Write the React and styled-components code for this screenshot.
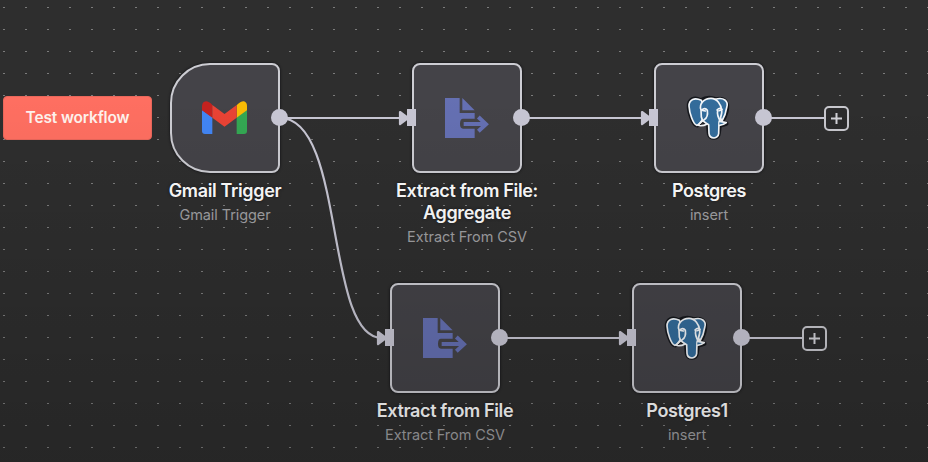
import React from "react";
import styled, { createGlobalStyle, css } from "styled-components";

const GlobalStyle = createGlobalStyle`
  body { margin: 0; background: #2e2e2e; overflow: hidden; }
  *, *::before, *::after { box-sizing: border-box; }
`;

const wire = "#c8c7d4";

const Canvas = styled.main`
  position: relative;
  display: flex;
  align-items: flex-start;
  width: 928px;
  height: 462px;
  padding: 96px 3px;
  overflow: hidden;
  background-color: #2e2e2e;
  background-image: radial-gradient(ellipse 1.3px 0.9px at 4px 7.5px, #7c7c7c 60%, transparent 100%);
  background-size: 22px 22px;
  font-family: Inter, "Liberation Sans", sans-serif;
`;

const Shade = styled.div`
  position: absolute;
  inset: 0;
  pointer-events: none;
  background: linear-gradient(rgba(0, 0, 0, 0) 20%, rgba(0, 0, 0, 0.17) 100%);
`;

const Wires = styled.svg`
  position: absolute;
  inset: 0;
  fill: none;
  stroke: ${wire};
  stroke-width: 2.2;
`;

const TestButton = styled.button`
  width: 149px;
  height: 44px;
  padding: 0;
  border: 1px solid #e9675b;
  border-radius: 4px;
  background: #ff6f61;
  color: #fff3ee;
  font: 600 15.5px/42px Inter, "Liberation Sans", sans-serif;
  letter-spacing: -0.15px;
  text-align: center;
`;

const NodeRoot = styled.article`
  position: absolute;
  left: ${(p) => p.$x - 25}px;
  top: ${(p) => p.$y}px;
  width: 160px;
  display: flex;
  flex-direction: column;
  align-items: center;
`;

const NodeBox = styled.div`
  position: relative;
  display: flex;
  align-items: center;
  justify-content: center;
  width: 110px;
  height: 110px;
  border: 2px solid #cdcdd3;
  border-radius: ${(p) => (p.$trigger ? "40px 8px 8px 40px" : "8px")};
  background: #444348;
  box-shadow: 0 0 2px 1px rgba(20, 20, 24, 0.6);
`;

const handle = css`
  position: absolute;
  background: ${wire};
`;

const OutputHandle = styled.span`
  ${handle}
  right: -10px;
  top: 44px;
  width: 17px;
  height: 17px;
  border-radius: 50%;
`;

const InputHandle = styled.span`
  ${handle}
  left: -7px;
  top: 44px;
  width: 9px;
  height: 17px;
`;

const Title = styled.h2`
  margin: 7px 0 0;
  color: #fff;
  font-size: 18px;
  font-weight: 600;
  line-height: 22px;
  letter-spacing: -0.36px;
  text-align: center;
  white-space: pre-line;
  text-shadow: 0 0 3px #18181c;
`;

const Subtitle = styled.p`
  margin: 2px 0 0;
  color: #a0a0a3;
  font-size: 14.5px;
  line-height: 22px;
  letter-spacing: -0.08px;
  text-align: center;
`;

const AddButton = styled.button`
  position: absolute;
  left: ${(p) => p.$x}px;
  top: ${(p) => p.$y}px;
  display: flex;
  align-items: center;
  justify-content: center;
  width: 25px;
  height: 25px;
  padding: 0;
  border: 2px solid #c8c8ce;
  border-radius: 5px;
  background: #2b2b2c;
`;

const GmailIcon = () => (
  <svg width="60" height="60" viewBox="0 -6 180 180">
    <path d="M21 60 L52 82 V132 H30 Q21 132 21 123Z" fill="#4285f4" />
    <path d="M125 82 L156 60 V123 Q156 132 147 132 H125Z" fill="#34a853" />
    <path d="M125 46 Q137 33 147 34 Q156 37 156 48 V61 L125 83Z" fill="#fbbc04" />
    <path d="M21 48 Q22 35 33 34 Q42 34 52 45 V83 L21 61Z" fill="#c5221f" />
    <path d="M52 45 L88.500 72 L125 45 V83 L88.500 110 L52 83Z" fill="#ea4335" />
  </svg>
);

const FileIcon = () => (
  <svg width="60" height="60" viewBox="6 9 180 180" fill="#6570b3">
    <path d="M30 39 H74 V84 H119 V101 H84 Q75 101 75 117 Q75 131 84 131 H119 V159 H30Z" />
    <path d="M82 39 L119 76 H82Z" />
    <path
      d="M86 117 H150 M130 96 L153 117.500 L130 139"
      fill="none"
      stroke="#6570b3"
      strokeWidth="12"
    />
  </svg>
);

const PostgresIcon = () => (
  <svg width="60" height="60" viewBox="-3 9 180 180" strokeLinejoin="round" strokeLinecap="round">
    <g fill="#336791" stroke="#15171c" strokeWidth="13">
      <path d="M62 46 Q41 35 29 51 Q22 64 34 97 Q43 122 52 121 L65 108 L84 115 L87 147 Q90 158 102 158 Q115 157 116 145 L119 122 L139 116 L127 108 Q143 83 141 60 Q136 37 107 43 Q85 33 62 46Z" />
    </g>
    <g fill="#336c9b" stroke="#f4f7fa" strokeWidth="5">
      <path d="M106 43 C130 35 147 48 140 68 Q137 90 126 108 L111 80Z" />
      <path d="M64 46 C44 36 27 43 27 63 C28 82 39 119 51 121 Q57 119 67 104 L75 71Z" />
      <path d="M63 75 C56 57 72 40 93 40 C112 40 123 59 125 75 C128 88 120 98 117 112 L116 146 Q114 158 102 159 Q88 158 87 145 L86 119 Q67 110 64 96Z" />
      <path d="M65 75 Q75 66 82 76 Q85 96 73 104 Q65 108 54 121 Q66 125 82 117" fill="none" />
      <path d="M111 75 Q119 67 126 73 M113 77 Q110 91 121 108" fill="none" />
      <path d="M119 109 L139 113 Q129 121 118 121" />
    </g>
    <path d="M68 76 L76 78 M117 77 L123 75" stroke="#f4f7fa" strokeWidth="5" />
  </svg>
);

const icons = { gmail: GmailIcon, file: FileIcon, postgres: PostgresIcon };

const nodes = [
  { id: "gmail", x: 170, y: 63, icon: "gmail", title: "Gmail Trigger", sub: "Gmail Trigger", trigger: true },
  { id: "aggregate", x: 412, y: 63, icon: "file", title: "Extract from File:\nAggregate", sub: "Extract From CSV" },
  { id: "postgres", x: 654, y: 63, icon: "postgres", title: "Postgres", sub: "insert" },
  { id: "extract", x: 390, y: 283, icon: "file", title: "Extract from File", sub: "Extract From CSV" },
  { id: "postgres1", x: 632, y: 283, icon: "postgres", title: "Postgres1", sub: "insert" },
];

const arrows = [
  [399, 118],
  [641, 118],
  [377, 338],
  [619, 338],
];

function WorkflowNode({ x, y, icon, title, sub, trigger }) {
  const Icon = icons[icon];
  return (
    <NodeRoot $x={x} $y={y}>
      <NodeBox $trigger={trigger}>
        <Icon />
        {!trigger && <InputHandle />}
        <OutputHandle />
      </NodeBox>
      <Title>{title}</Title>
      <Subtitle>{sub}</Subtitle>
    </NodeRoot>
  );
}

function AddNode({ x, y }) {
  return (
    <AddButton $x={x} $y={y} aria-label="Add node">
      <svg width="13" height="13" viewBox="0 0 13 13" stroke="#d2d2d8" strokeWidth="2">
        <path d="M6.500 1V12M1 6.500H12" />
      </svg>
    </AddButton>
  );
}

export default function App() {
  return (
    <>
      <GlobalStyle />
      <Canvas>
        <Wires width="928" height="462">
          <path d="M280 118H404M522 118H646M764 118H825M500 338H624M742 338H803" />
          <path d="M280 118C346 118 324 338 382 338" />
          {arrows.map(([x, y]) => (
            <path
              key={`${x}-${y}`}
              d={`M${x + 1} ${y - 6}L${x + 9} ${y}L${x + 1} ${y + 6}Z`}
              fill={wire}
              strokeLinejoin="round"
            />
          ))}
        </Wires>
        <TestButton>Test workflow</TestButton>
        {nodes.map((node) => (
          <WorkflowNode key={node.id} {...node} />
        ))}
        <AddNode x={824} y={106} />
        <AddNode x={802} y={326} />
        <Shade />
      </Canvas>
    </>
  );
}
